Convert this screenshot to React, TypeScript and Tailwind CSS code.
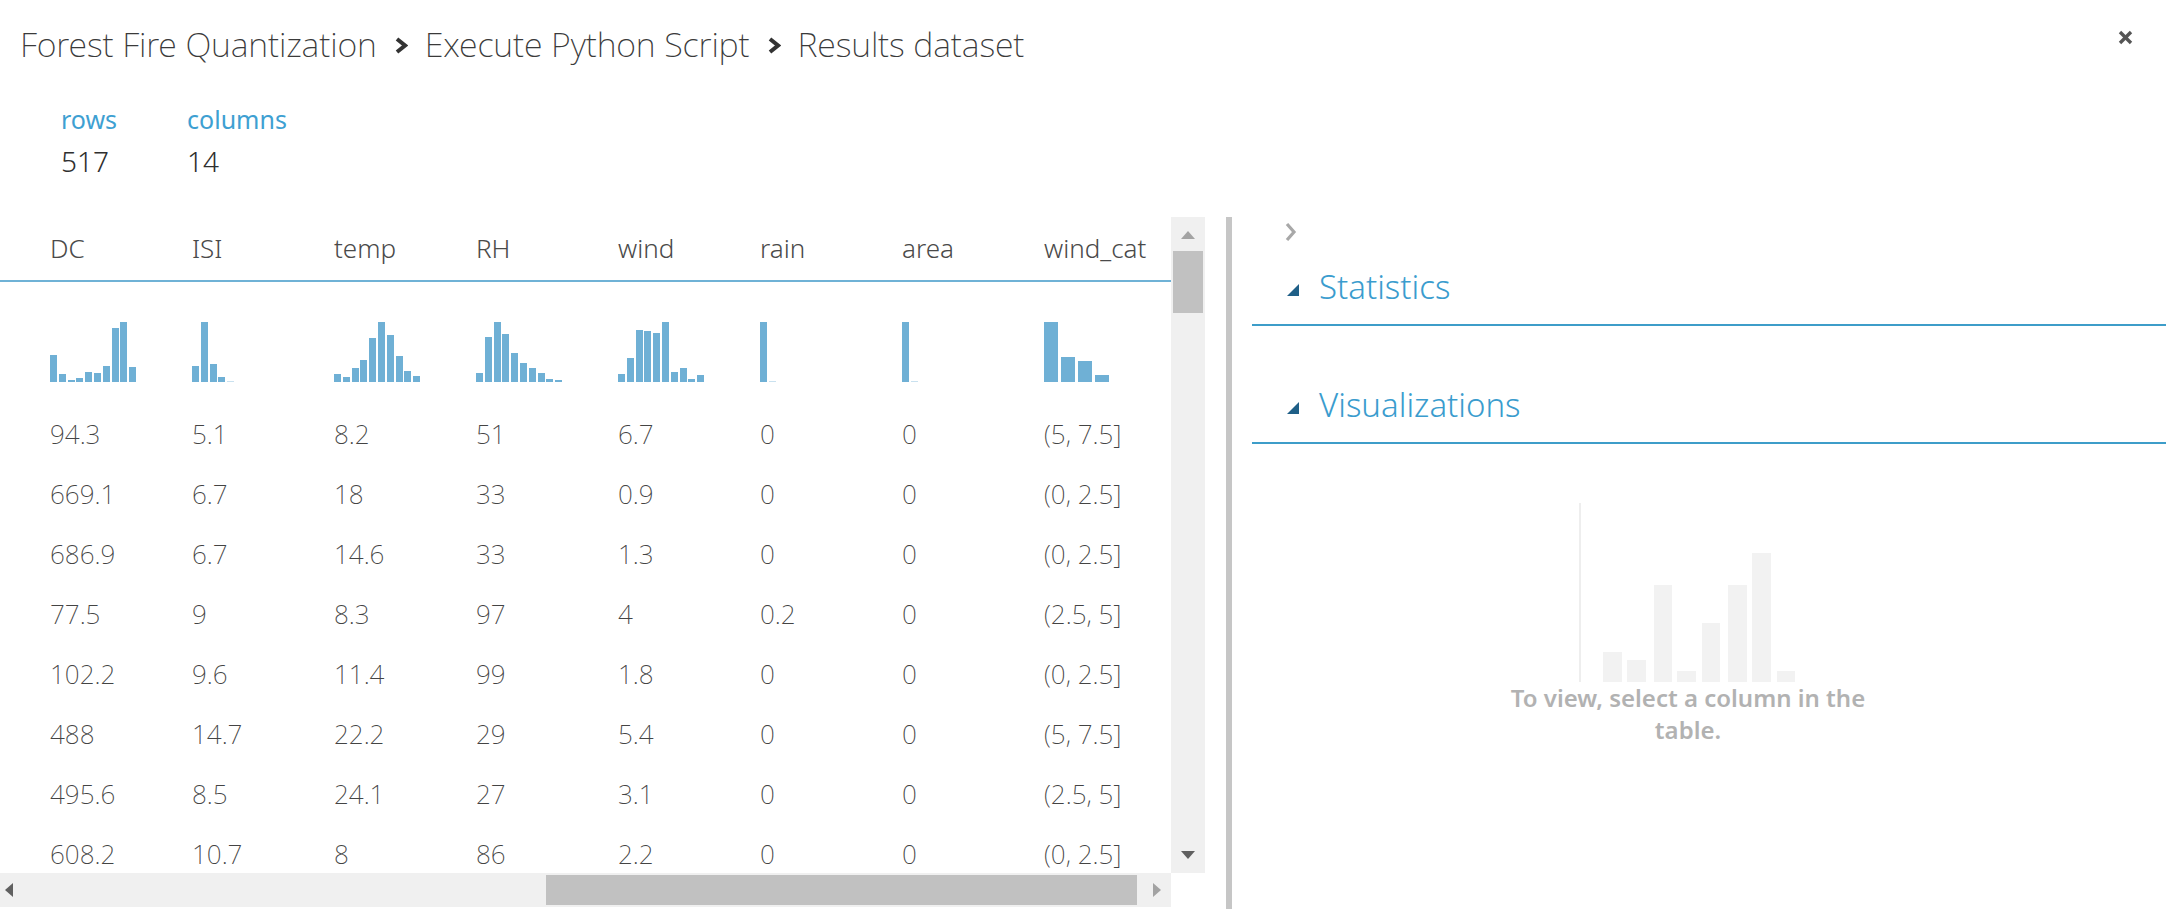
import React from 'react';

const columns = ['DC', 'ISI', 'temp', 'RH', 'wind', 'rain', 'area', 'wind_cat'];

// bar heights in px (max 60), "faint" bars drawn lighter
const histograms: { h: number[]; wide?: boolean; faint?: number[] }[] = [
    { h: [27, 8.3, 2.3, 3.7, 9.7, 8.7, 15.7, 54, 60, 15.3] },
    { h: [15.7, 60, 17.7, 4.7, 1], faint: [4] },
    { h: [8.4, 5, 14.5, 22, 44, 60, 47, 26, 11, 6] },
    { h: [9.4, 45, 60, 48, 29, 19, 14, 9.4, 2.7, 2] },
    { h: [7.8, 24, 52, 50.6, 49, 60, 9.8, 13.8, 2.7, 7] },
    { h: [60, 1], faint: [1] },
    { h: [60, 1], faint: [1] },
    { h: [60, 24.6, 21, 7], wide: true },
];

const rows = [
    ['94.3', '5.1', '8.2', '51', '6.7', '0', '0', '(5, 7.5]'],
    ['669.1', '6.7', '18', '33', '0.9', '0', '0', '(0, 2.5]'],
    ['686.9', '6.7', '14.6', '33', '1.3', '0', '0', '(0, 2.5]'],
    ['77.5', '9', '8.3', '97', '4', '0.2', '0', '(2.5, 5]'],
    ['102.2', '9.6', '11.4', '99', '1.8', '0', '0', '(0, 2.5]'],
    ['488', '14.7', '22.2', '29', '5.4', '0', '0', '(5, 7.5]'],
    ['495.6', '8.5', '24.1', '27', '3.1', '0', '0', '(2.5, 5]'],
    ['608.2', '10.7', '8', '86', '2.2', '0', '0', '(0, 2.5]'],
];

const Crumb = () => (
    <svg width="14" height="17" viewBox="0 0 14 17" className="ml-[17px] mr-[17px] mt-[3px]">
        <polyline points="3,2 11,8.5 3,15" fill="none" stroke="#333" strokeWidth="4" />
    </svg>
);

const Triangle = () => (
    <svg width="12" height="12" viewBox="0 0 12 12" className="mr-[20px] mt-[6px]">
        <polygon points="12,0 12,12 0,12" fill="#1f5f87" />
    </svg>
);

const App: React.FC = () => {
    return (
        <div className="w-[2166px] h-[909px] bg-white flex flex-col overflow-hidden font-['Noto_Sans','Open_Sans',sans-serif]">
            {/* Breadcrumb */}
            <div className="h-[88px] shrink-0 flex items-center justify-between pl-[20px] pr-[33px]">
                <div className="flex items-center text-[34px] font-extralight text-[#3a3a3a] tracking-[-0.15px]">
                    <span>Forest Fire Quantization</span>
                    <Crumb />
                    <span>Execute Python Script</span>
                    <Crumb />
                    <span>Results dataset</span>
                </div>
                <svg width="15" height="15" viewBox="0 0 15 15" className="mb-[14px]">
                    <line x1="2" y1="2" x2="13" y2="13" stroke="#555" strokeWidth="3.4" />
                    <line x1="13" y1="2" x2="2" y2="13" stroke="#555" strokeWidth="3.4" />
                </svg>
            </div>

            {/* rows / columns */}
            <div className="h-[129px] shrink-0 flex pl-[61px] pt-[13px] gap-[70px]">
                <div className="flex flex-col">
                    <span className="text-[25px] leading-[36px] text-[#3ea0d2]">rows</span>
                    <span className="text-[28px] leading-[48px] font-light text-[#2f2f2f]">517</span>
                </div>
                <div className="flex flex-col">
                    <span className="text-[25px] leading-[36px] text-[#3ea0d2]">columns</span>
                    <span className="text-[28px] leading-[48px] font-light text-[#2f2f2f]">14</span>
                </div>
            </div>

            {/* Main */}
            <div className="flex-1 flex min-h-0">
                {/* Table */}
                <div className="w-[1205px] flex flex-col">
                    <div className="flex h-[656px] shrink-0">
                        <div className="w-[1171px] overflow-hidden flex flex-col">
                            <div className="grid grid-cols-[repeat(8,142px)] pl-[50px] h-[65px] shrink-0 items-center text-[26px] font-light text-[#4a4a4a] border-b-2 border-[#6fb2d6]">
                                {columns.map(c => (
                                    <div key={c}>{c}</div>
                                ))}
                            </div>
                            <div className="grid grid-cols-[repeat(8,142px)] pl-[50px] h-[122px] shrink-0 pt-[40px]">
                                {histograms.map((hg, i) => (
                                    <div key={i} className={`flex items-end h-[60px] ${hg.wide ? 'gap-[3px]' : 'gap-[1.8px]'}`}>
                                        {hg.h.map((v, j) => (
                                            <div
                                                key={j}
                                                className={`${hg.wide ? 'w-[14px]' : 'w-[7px]'} ${hg.faint?.includes(j) ? 'bg-[#c9e1ef]' : 'bg-[#6fb0d5]'}`}
                                                style={{ height: v }}
                                            />
                                        ))}
                                    </div>
                                ))}
                            </div>
                            {rows.map((r, i) => (
                                <div key={i} className="grid grid-cols-[repeat(8,142px)] pl-[50px] h-[60px] shrink-0 items-center text-[26px] font-extralight text-[#444]">
                                    {r.map((v, j) => (
                                        <div key={j}>{v}</div>
                                    ))}
                                </div>
                            ))}
                        </div>
                        {/* vertical scrollbar */}
                        <div className="w-[34px] bg-[#f0f0f0] flex flex-col items-center">
                            <svg width="14" height="8" viewBox="0 0 14 8" className="mt-[14px]">
                                <polygon points="7,0 14,8 0,8" fill="#a3a3a3" />
                            </svg>
                            <div className="w-[30px] h-[62px] bg-[#c1c1c1] mt-[12px]" />
                            <div className="flex-1" />
                            <svg width="14" height="8" viewBox="0 0 14 8" className="mb-[14px]">
                                <polygon points="0,0 14,0 7,8" fill="#606060" />
                            </svg>
                        </div>
                    </div>
                    {/* horizontal scrollbar */}
                    <div className="w-[1171px] h-[34px] shrink-0 bg-[#f0f0f0] flex items-center">
                        <svg width="8" height="14" viewBox="0 0 8 14" className="ml-[5px]">
                            <polygon points="8,0 8,14 0,7" fill="#606060" />
                        </svg>
                        <div className="w-[591px] h-[30px] bg-[#c1c1c1] ml-[533px]" />
                        <svg width="8" height="14" viewBox="0 0 8 14" className="ml-[16px]">
                            <polygon points="0,0 0,14 8,7" fill="#a3a3a3" />
                        </svg>
                    </div>
                </div>

                <div className="w-[21px]" />
                <div className="w-[6px] bg-[#c6c6c6]" />

                {/* Right panel */}
                <div className="flex-1 flex flex-col pl-[20px]">
                    <div className="h-[33px] pl-[31px] pt-[5px]">
                        <svg width="15" height="20" viewBox="0 0 15 20">
                            <polyline points="4,2 11,10 4,18" fill="none" stroke="#a8a8a8" strokeWidth="3.2" />
                        </svg>
                    </div>
                    <div className="h-[74px] flex items-center pl-[35px] border-b-2 border-[#3d9dc9] box-content">
                        <Triangle />
                        <span className="text-[33px] font-light text-[#3a9cce]">Statistics</span>
                    </div>
                    <div className="h-[74px] mt-[42px] flex items-center pl-[35px] border-b-2 border-[#3d9dc9] box-content">
                        <Triangle />
                        <span className="text-[33px] font-light text-[#3a9cce]">Visualizations</span>
                    </div>
                    <div className="w-[390px] ml-[241px] mt-[59px] flex flex-col items-center">
                        <svg width="218" height="179" viewBox="0 0 218 179">
                            <rect x="0" y="0" width="2" height="179" fill="#eeeeee" />
                            <rect x="24" y="149" width="19" height="30" fill="#f2f2f2" />
                            <rect x="48" y="157" width="19" height="22" fill="#f2f2f2" />
                            <rect x="75" y="82" width="18" height="97" fill="#f2f2f2" />
                            <rect x="98" y="168" width="19" height="11" fill="#f2f2f2" />
                            <rect x="123" y="120" width="18" height="59" fill="#f2f2f2" />
                            <rect x="149" y="82" width="19" height="97" fill="#f2f2f2" />
                            <rect x="173" y="50" width="19" height="129" fill="#f2f2f2" />
                            <rect x="198" y="168" width="18" height="11" fill="#f2f2f2" />
                        </svg>
                        <p className="text-center text-[24px] leading-[32px] font-semibold text-[#b2b2b2]">
                            To view, select a column in the table.
                        </p>
                    </div>
                </div>
            </div>
        </div>
    );
};

export default App;
